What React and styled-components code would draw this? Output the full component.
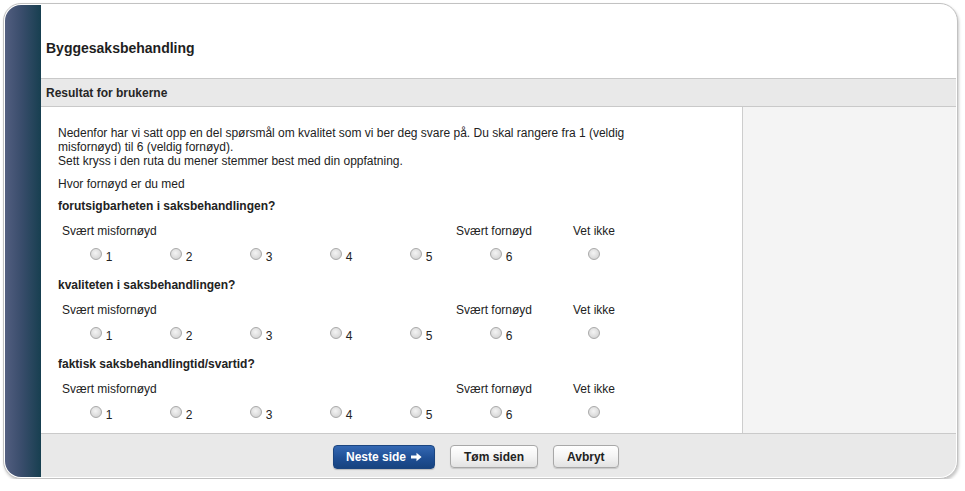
import React from "react";
import styled, { createGlobalStyle } from "styled-components";

const GlobalStyle = createGlobalStyle`
  html, body {
    margin: 0;
    padding: 0;
    background: #ffffff;
  }
  body {
    font-family: "Liberation Sans", Arial, sans-serif;
    font-size: 12px;
    color: #222;
  }
`;

const Frame = styled.div`
  box-sizing: border-box;
  width: 955px;
  height: 476px;
  margin: 3px 0 0 3px;
  padding: 1px;
  border: 1px solid #c2c2c2;
  border-radius: 18px;
  background: #fff;
  box-shadow: 1px 2px 3px rgba(0, 0, 0, 0.22);
`;

const Inner = styled.div`
  height: 100%;
  display: grid;
  grid-template-columns: 36px 1fr;
  border-radius: 16px;
  overflow: hidden;
`;

const Sidebar = styled.div`
  background: linear-gradient(to right, #525e80, #3a4d6c 45%, #173f50);
`;

const Body = styled.div`
  display: flex;
  flex-direction: column;
  min-height: 0;
`;

const Header = styled.div`
  height: 74px;
  flex-shrink: 0;
  border-bottom: 1px solid #c9c9c9;
  display: flex;
  align-items: flex-end;
  padding: 0 0 22px 5px;
  box-sizing: border-box;

  h1 {
    margin: 0;
    font-size: 14px;
    font-weight: bold;
    line-height: 16px;
    color: #1e1e1e;
  }
`;

const SubBar = styled.div`
  height: 27px;
  flex-shrink: 0;
  background: #e9e9e9;
  border-bottom: 1px solid #c9c9c9;
  display: flex;
  align-items: center;
  padding-left: 5px;
  font-weight: bold;
  font-size: 12px;
  color: #262626;
`;

const Main = styled.div`
  flex: 1;
  min-height: 0;
  display: grid;
  grid-template-columns: 702px 1fr;
  overflow: hidden;
`;

const Content = styled.div`
  background: #fff;
  border-right: 1px solid #cdcdcd;
  padding: 19px 0 0 17px;
  overflow: hidden;
`;

const Aside = styled.div`
  background: #f4f4f4;
`;

const Intro = styled.p`
  margin: 0;
  max-width: 610px;
  line-height: 14px;
`;

const Lead = styled.p`
  margin: 9px 0 8px;
  line-height: 14px;
`;

const Question = styled.div`
  margin-bottom: 13px;
`;

const QuestionTitle = styled.div`
  font-weight: bold;
  line-height: 14px;
  margin-bottom: 11px;
`;

const Scale = styled.div`
  display: grid;
  grid-template-columns: repeat(6, 80px) 106px;
  margin-left: 3px;
`;

const LabelRow = styled(Scale)`
  height: 14px;
  line-height: 14px;
  margin-bottom: 7px;
`;

const Label = styled.span`
  white-space: nowrap;
  justify-self: ${(p) => p.$align || "center"};
  padding-left: ${(p) => (p.$align === "start" ? "1px" : "0")};
  margin-right: ${(p) => p.$shift || 0}px;
`;

const RadioRow = styled(Scale)`
  height: 20px;
`;

const Cell = styled.label`
  display: flex;
  align-items: center;
  justify-content: center;
  gap: 4px;
`;

const Radio = styled.input.attrs({ type: "radio" })`
  appearance: none;
  margin: 0 0 3px;
  width: 12px;
  height: 12px;
  border-radius: 50%;
  border: 1px solid #a9a9a9;
  box-sizing: border-box;
  background: radial-gradient(circle at 45% 40%, #f4f4f4 0%, #dedede 55%, #c9c9c9 100%);
`;

const Num = styled.span`
  line-height: 14px;
  margin-top: 4px;
`;

const Footer = styled.div`
  height: 41px;
  flex-shrink: 0;
  border-top: 1px solid #cacaca;
  background: #e9e9e9;
  display: flex;
  align-items: center;
  padding: 2px 0 0 292px;
  box-sizing: content-box;
`;

const Button = styled.button`
  height: ${(p) => (p.$primary ? "24px" : "23px")};
  padding: 0 ${(p) => p.$pad || 12}px;
  margin-right: ${(p) => p.$gap || 0}px;
  border-radius: 4px;
  font-family: "Liberation Sans", Arial, sans-serif;
  font-size: 12px;
  font-weight: bold;
  display: flex;
  align-items: center;
  gap: 5px;
  cursor: pointer;
  color: ${(p) => (p.$primary ? "#fff" : "#222")};
  border: 1px solid ${(p) => (p.$primary ? "#1b4580" : "#a8a8a8")};
  background: ${(p) =>
    p.$primary
      ? "linear-gradient(to bottom, #3468b3, #1f4f95 55%, #17437f)"
      : "linear-gradient(to bottom, #ffffff, #f4f4f4 50%, #e2e2e2)"};
  box-shadow: ${(p) =>
    p.$primary ? "0 1px 1px rgba(0,0,0,0.2)" : "0 1px 1px rgba(0,0,0,0.15)"};
`;

const Arrow = () => (
  <svg width="11" height="10" viewBox="0 0 11 10">
    <path d="M0 3.6h5.5V0.8L10.6 5 5.5 9.2V6.4H0z" fill="#fff" />
  </svg>
);

const questions = [
  "forutsigbarheten i saksbehandlingen?",
  "kvaliteten i saksbehandlingen?",
  "faktisk saksbehandlingtid/svartid?",
];

const QuestionBlock = ({ title, name }) => (
  <Question>
    <QuestionTitle>{title}</QuestionTitle>
    <LabelRow>
      <Label $align="start">Svært misfornøyd</Label>
      <span />
      <span />
      <span />
      <span />
      <Label $shift={14}>Svært fornøyd</Label>
      <Label>Vet ikke</Label>
    </LabelRow>
    <RadioRow>
      {[1, 2, 3, 4, 5, 6].map((n) => (
        <Cell key={n}>
          <Radio name={name} />
          <Num>{n}</Num>
        </Cell>
      ))}
      <Cell>
        <Radio name={name} />
      </Cell>
    </RadioRow>
  </Question>
);

export default function App() {
  return (
    <>
      <GlobalStyle />
      <Frame>
        <Inner>
          <Sidebar />
          <Body>
            <Header>
              <h1>Byggesaksbehandling</h1>
            </Header>
            <SubBar>Resultat for brukerne</SubBar>
            <Main>
              <Content>
                <Intro>
                  Nedenfor har vi satt opp en del spørsmål om kvalitet som vi ber deg svare på. Du skal rangere fra 1 (veldig misfornøyd) til 6 (veldig fornøyd).
                  <br />
                  Sett kryss i den ruta du mener stemmer best med din oppfatning.
                </Intro>
                <Lead>Hvor fornøyd er du med</Lead>
                {questions.map((q, i) => (
                  <QuestionBlock key={q} title={q} name={`q${i}`} />
                ))}
              </Content>
              <Aside />
            </Main>
            <Footer>
              <Button $primary $pad={12} $gap={15}>
                Neste side <Arrow />
              </Button>
              <Button $pad={13} $gap={15}>Tøm siden</Button>
              <Button $pad={13}>Avbryt</Button>
            </Footer>
          </Body>
        </Inner>
      </Frame>
    </>
  );
}
